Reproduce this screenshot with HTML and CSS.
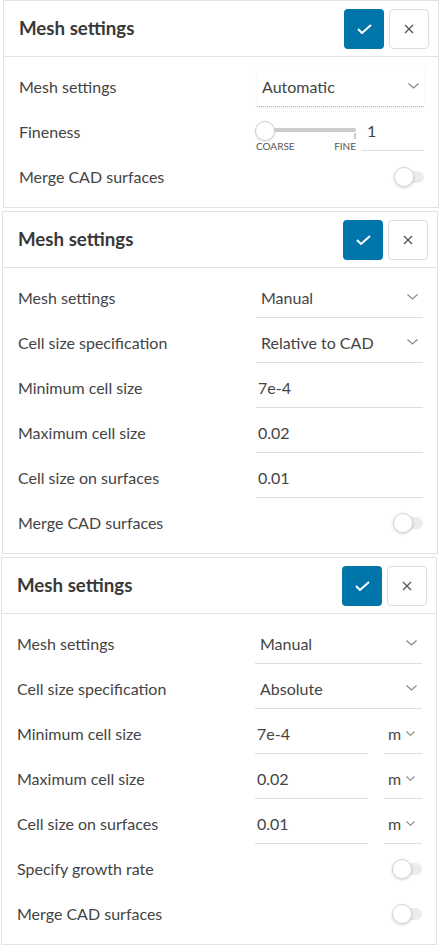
FILE: index.html
```html
<!DOCTYPE html>
<html>
<head>
<meta charset="utf-8">
<link rel="stylesheet" href="styles.css">
</head>
<body>
<div class="panel p1">
  <div class="head">
    <h2 class="title">Mesh settings</h2>
    <div class="actions">
      <button class="ok"><svg width="15" height="10" viewBox="0 0 15 10"><polyline points="1,5 5,9 14,1" fill="none" stroke="#fff" stroke-width="2"/></svg></button>
      <button class="close"><svg width="10" height="10" viewBox="0 0 10 10"><path d="M1 1L9 9M9 1L1 9" stroke="#555" stroke-width="1.3" fill="none"/></svg></button>
    </div>
  </div>
  <div class="body">
    <div class="row"><span class="label">Mesh settings</span>
      <div class="ctrl"><div class="select focused"><span>Automatic</span><svg class="chev" width="11" height="6" viewBox="0 0 11 6"><polyline points="0.5,0.5 5.5,5 10.5,0.5" fill="none" stroke="#888" stroke-width="1.2"/></svg></div></div>
    </div>
    <div class="row"><span class="label">Fineness</span>
      <div class="ctrl fine">
        <div class="slider">
          <div class="slide-area"><span class="track"></span><span class="tick"></span><span class="thumb"></span></div>
          <div class="marks"><span>COARSE</span><span>FINE</span></div>
        </div>
        <div class="num">1</div>
      </div>
    </div>
    <div class="row"><span class="label">Merge CAD surfaces</span>
      <div class="ctrl sw"><span class="toggle"><span class="ttrack"></span><span class="knob"></span></span></div>
    </div>
  </div>
</div>

<div class="panel p2">
  <div class="head">
    <h2 class="title">Mesh settings</h2>
    <div class="actions">
      <button class="ok"><svg width="15" height="10" viewBox="0 0 15 10"><polyline points="1,5 5,9 14,1" fill="none" stroke="#fff" stroke-width="2"/></svg></button>
      <button class="close"><svg width="10" height="10" viewBox="0 0 10 10"><path d="M1 1L9 9M9 1L1 9" stroke="#555" stroke-width="1.3" fill="none"/></svg></button>
    </div>
  </div>
  <div class="body">
    <div class="row"><span class="label">Mesh settings</span>
      <div class="ctrl"><div class="select"><span>Manual</span><svg class="chev" width="11" height="6" viewBox="0 0 11 6"><polyline points="0.5,0.5 5.5,5 10.5,0.5" fill="none" stroke="#888" stroke-width="1.2"/></svg></div></div>
    </div>
    <div class="row"><span class="label">Cell size specification</span>
      <div class="ctrl"><div class="select"><span>Relative to CAD</span><svg class="chev" width="11" height="6" viewBox="0 0 11 6"><polyline points="0.5,0.5 5.5,5 10.5,0.5" fill="none" stroke="#888" stroke-width="1.2"/></svg></div></div>
    </div>
    <div class="row"><span class="label">Minimum cell size</span>
      <div class="ctrl"><div class="input">7e-4</div></div>
    </div>
    <div class="row"><span class="label">Maximum cell size</span>
      <div class="ctrl"><div class="input">0.02</div></div>
    </div>
    <div class="row"><span class="label">Cell size on surfaces</span>
      <div class="ctrl"><div class="input">0.01</div></div>
    </div>
    <div class="row"><span class="label">Merge CAD surfaces</span>
      <div class="ctrl sw"><span class="toggle"><span class="ttrack"></span><span class="knob"></span></span></div>
    </div>
  </div>
</div>

<div class="panel p3">
  <div class="head">
    <h2 class="title">Mesh settings</h2>
    <div class="actions">
      <button class="ok"><svg width="15" height="10" viewBox="0 0 15 10"><polyline points="1,5 5,9 14,1" fill="none" stroke="#fff" stroke-width="2"/></svg></button>
      <button class="close"><svg width="10" height="10" viewBox="0 0 10 10"><path d="M1 1L9 9M9 1L1 9" stroke="#555" stroke-width="1.3" fill="none"/></svg></button>
    </div>
  </div>
  <div class="body">
    <div class="row"><span class="label">Mesh settings</span>
      <div class="ctrl"><div class="select"><span>Manual</span><svg class="chev" width="11" height="6" viewBox="0 0 11 6"><polyline points="0.5,0.5 5.5,5 10.5,0.5" fill="none" stroke="#888" stroke-width="1.2"/></svg></div></div>
    </div>
    <div class="row"><span class="label">Cell size specification</span>
      <div class="ctrl"><div class="select"><span>Absolute</span><svg class="chev" width="11" height="6" viewBox="0 0 11 6"><polyline points="0.5,0.5 5.5,5 10.5,0.5" fill="none" stroke="#888" stroke-width="1.2"/></svg></div></div>
    </div>
    <div class="row"><span class="label">Minimum cell size</span>
      <div class="ctrl unitrow"><div class="input short">7e-4</div><div class="unit"><span>m</span><svg class="uchev" width="9" height="5" viewBox="0 0 9 5"><polyline points="0.5,0.5 4.5,4.3 8.5,0.5" fill="none" stroke="#888" stroke-width="1.1"/></svg></div></div>
    </div>
    <div class="row"><span class="label">Maximum cell size</span>
      <div class="ctrl unitrow"><div class="input short">0.02</div><div class="unit"><span>m</span><svg class="uchev" width="9" height="5" viewBox="0 0 9 5"><polyline points="0.5,0.5 4.5,4.3 8.5,0.5" fill="none" stroke="#888" stroke-width="1.1"/></svg></div></div>
    </div>
    <div class="row"><span class="label">Cell size on surfaces</span>
      <div class="ctrl unitrow"><div class="input short">0.01</div><div class="unit"><span>m</span><svg class="uchev" width="9" height="5" viewBox="0 0 9 5"><polyline points="0.5,0.5 4.5,4.3 8.5,0.5" fill="none" stroke="#888" stroke-width="1.1"/></svg></div></div>
    </div>
    <div class="row"><span class="label">Specify growth rate</span>
      <div class="ctrl sw"><span class="toggle"><span class="ttrack"></span><span class="knob"></span></span></div>
    </div>
    <div class="row"><span class="label">Merge CAD surfaces</span>
      <div class="ctrl sw"><span class="toggle"><span class="ttrack"></span><span class="knob"></span></span></div>
    </div>
  </div>
</div>
</body>
</html>
```

FILE: styles.css
```css
body {
  margin: 0;
  background: #fff;
  font-family: Lato, "Open Sans", sans-serif;
  color: #444;
}

.panel {
  width: 436px;
  box-sizing: border-box;
  border: 1px solid #e2e2e2;
  background: #fff;
}
.p1 { margin: 0 0 0 3px; }
.p2 { margin: 3px 0 0 2px; }
.p3 { margin: 3px 0 0 1px; }

.head {
  height: 55px;
  display: flex;
  align-items: center;
  justify-content: space-between;
  padding: 0 9px 0 15px;
  border-bottom: 1px solid #e2e2e2;
}
.title {
  margin: 0 0 1px;
  font-size: 18.7px;
  font-weight: 700;
  color: #383838;
}
.actions {
  display: flex;
  gap: 5px;
}
.ok, .close {
  width: 40px;
  height: 40px;
  padding: 0;
  border-radius: 4px;
  display: flex;
  align-items: center;
  justify-content: center;
  box-sizing: border-box;
}
.ok {
  border: 0;
  background: #0075a9;
}
.close {
  border: 1px solid #dedede;
  background: #fff;
}

.body {
  padding: 7px 14px 8px 15px;
}
.row {
  height: 45px;
  display: flex;
  align-items: center;
}
.label {
  flex: 1;
  font-size: 16px;
  color: #444;
  margin-bottom: 1px;
}
.ctrl {
  width: 167px;
}

.select {
  height: 40px;
  border-bottom: 1px solid #dddddd;
  display: flex;
  align-items: center;
  justify-content: space-between;
  padding: 0 5px 0 5px;
  font-size: 16px;
}
.select.focused {
  border-bottom: 1px dotted #7cc4e4;
  box-shadow: 0 1px 3px rgba(0, 0, 0, 0.06);
}
.chev { display: block; }

.input {
  height: 40px;
  border-bottom: 1px solid #dddddd;
  display: flex;
  align-items: center;
  padding-left: 2px;
  font-size: 16px;
}

.unitrow {
  display: flex;
  justify-content: space-between;
}
.input.short {
  width: 111px;
}
.unit {
  width: 34px;
  height: 40px;
  border-bottom: 1px solid #dddddd;
  display: flex;
  align-items: center;
  padding-left: 4px;
  font-size: 16px;
  color: #4a4a4a;
}
.uchev {
  display: block;
  margin-left: 5px;
  margin-top: 1px;
}

/* fineness slider */
.fine {
  display: flex;
  align-items: flex-start;
}
.slider {
  width: 101px;
  margin-left: -2px;
  display: flex;
  flex-direction: column;
}
.slide-area {
  position: relative;
  height: 30px;
}
.track {
  position: absolute;
  left: 10px;
  right: 0;
  top: 17px;
  height: 4px;
  background: #cccccc;
  border-radius: 2px;
}
.tick {
  position: absolute;
  right: 0;
  top: 22px;
  width: 2px;
  height: 6px;
  background: #cccccc;
}
.thumb {
  position: absolute;
  left: 0;
  top: 10px;
  width: 20px;
  height: 20px;
  box-sizing: border-box;
  border-radius: 50%;
  background: #fff;
  border: 1px solid #cfcfcf;
  box-shadow: 0 1px 2px rgba(0, 0, 0, 0.1);
}
.marks {
  display: flex;
  justify-content: space-between;
  padding-left: 1px;
  font-size: 10px;
  line-height: 11px;
  color: #555;
}
.num {
  width: 57px;
  margin-left: 6px;
  height: 39px;
  border-bottom: 1px solid #dddddd;
  display: flex;
  align-items: center;
  padding-left: 5px;
  font-size: 16px;
}

/* toggle */
.sw {
  display: flex;
  justify-content: flex-end;
}
.toggle {
  position: relative;
  width: 30px;
  height: 20px;
  display: block;
}
.ttrack {
  position: absolute;
  left: 2px;
  right: 0;
  top: 4px;
  height: 12px;
  border-radius: 6px;
  background: #ececec;
}
.knob {
  position: absolute;
  left: 0;
  top: 0;
  width: 20px;
  height: 20px;
  box-sizing: border-box;
  border-radius: 50%;
  background: #fff;
  border: 1px solid #d6d6d6;
  box-shadow: 0 1px 3px rgba(0, 0, 0, 0.18);
}
```
